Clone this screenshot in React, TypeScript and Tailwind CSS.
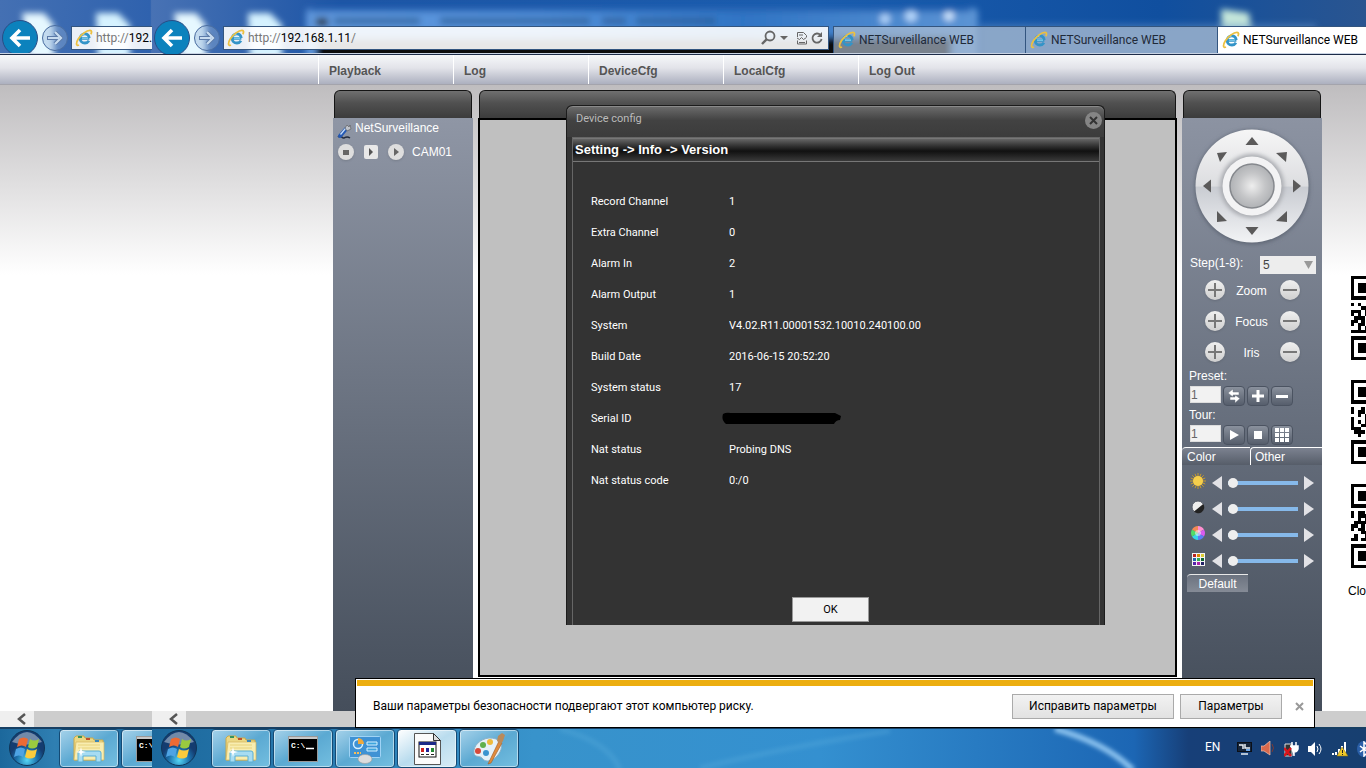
import { useState, type ReactNode } from "react";

const MENU = ["Playback", "Log", "DeviceCfg", "LocalCfg", "Log Out"];

const VERSION_ROWS: [string, string][] = [
  ["Record Channel", "1"],
  ["Extra Channel", "0"],
  ["Alarm In", "2"],
  ["Alarm Output", "1"],
  ["System", "V4.02.R11.00001532.10010.240100.00"],
  ["Build Date", "2016-06-15 20:52:20"],
  ["System status", "17"],
  ["Serial ID", ""],
  ["Nat status", "Probing DNS"],
  ["Nat status code", "0:/0"],
];

const UI_FONT = "font-[Roboto,'Noto_Sans',sans-serif]";

function IeIcon() {
  return (
    <svg width="18" height="18" viewBox="0 0 18 18" className="shrink-0">
      <path
        d="M5 9.400h9.400M14.200 9.200C14 6.400 12.200 4.800 9.800 4.800c-2.600 0-4.600 2-4.600 4.600 0 2.700 2 4.600 4.700 4.600 1.800 0 3.200-.8 4.100-2.200"
        fill="none"
        stroke="#3394c8"
        strokeWidth="2.800"
      />
      <path
        d="M5.500 8C6.100 6.100 7.700 5 9.600 5M7 9.200h6"
        fill="none"
        stroke="#8ad3f0"
        strokeWidth="1.200"
      />
      <path
        d="M4 16C1 17.400.6 14 3.400 9.800 6.400 5.200 11.600 1.400 15 1.400c2 0 1.800 2 .8 3.800"
        fill="none"
        stroke="#ecc040"
        strokeWidth="1.800"
      />
    </svg>
  );
}

function NavButtons() {
  return (
    <>
      <button
        aria-label="Back"
        className="w-9 h-9 mt-5 ml-0.5 shrink-0 rounded-full bg-[#0c82bd] border border-[#2a4d86] flex items-center justify-center"
      >
        <svg width="22" height="20" viewBox="0 0 22 20" fill="none" stroke="#fff" strokeWidth="3.600">
          <path d="M21 10H3M11 2L3 10l8 8" />
        </svg>
      </button>
      <button
        aria-label="Forward"
        className="w-[26px] h-[26px] mt-[25px] ml-1 shrink-0 rounded-full border border-[#4a6da0] bg-[#8fb0d8]/40 flex items-center justify-center"
      >
        <svg width="16" height="14" viewBox="0 0 16 14" fill="none">
          <path d="M0 7h13M8 1l6 6-6 6" stroke="#5b7aa8" strokeWidth="4" />
          <path d="M1 7h11M8 1l6 6-6 6" stroke="#c8dcf0" strokeWidth="2.200" />
        </svg>
      </button>
    </>
  );
}

function Browser({ full }: { full?: boolean }) {
  return (
    <div className="flex flex-1 items-start min-w-0">
      <NavButtons />
      <div
        className={`mt-[26px] ml-[3px] h-6 w-[606px] shrink-0 border border-[#33557f] bg-white/90 flex items-center pl-[3px] text-[12px] ${UI_FONT}`}
      >
        <IeIcon />
        <span className="ml-[3px] text-[#777] whitespace-nowrap">
          http://<span className="text-black">192.168.1.11</span>/
        </span>
        {full && (
          <div className="ml-auto mr-1 flex items-center gap-0.5 text-[#666]">
            <svg width="16" height="16" viewBox="0 0 16 16" fill="none" stroke="currentColor">
              <circle cx="10" cy="6" r="4.500" strokeWidth="1.800" />
              <path d="M6.800 9.200L2 14" strokeWidth="2.400" />
            </svg>
            <svg width="12" height="8" viewBox="0 0 12 8" className="mr-1">
              <path d="M2 2h8L6 6z" fill="currentColor" />
            </svg>
            <svg width="12" height="14" viewBox="0 0 12 14" fill="none" stroke="currentColor">
              <path d="M1.500 6V1.500h6l3 3V6M1.500 9.500V13h9V9.500M1 7l2.500 1.500 2-2 2 2 3-2" />
              <path d="M3 4h4M3 11.500h6" />
            </svg>
            <svg width="14" height="14" viewBox="0 0 14 14" fill="none" stroke="currentColor">
              <path d="M10.500 4A4.600 4.600 0 1 0 11.600 8" strokeWidth="1.800" />
              <path d="M12 1v5H7z" fill="currentColor" stroke="none" />
            </svg>
          </div>
        )}
      </div>
    </div>
  );
}

function TabButton({ active }: { active?: boolean }) {
  return (
    <button
      className={`mt-[26px] h-[27px] w-48 shrink-0 border-t border-l border-[#33557f] flex items-center gap-[3px] pl-1 text-[12px] ${UI_FONT} ${
        active ? "bg-white text-black" : "bg-[#b4c1d3]/65 text-[#1f2a38]"
      }`}
    >
      <IeIcon />
      NETSurveillance WEB
    </button>
  );
}

function ChromeGlass() {
  return (
    <svg
      className="absolute inset-0 w-full h-full"
      viewBox="0 0 1366 54"
      preserveAspectRatio="none"
    >
      <defs>
        <linearGradient id="sky" x1="0" x2="1" y1="0" y2="0">
          <stop offset="0" stopColor="#4470b3" />
          <stop offset="0.110" stopColor="#2f62ae" />
          <stop offset="0.111" stopColor="#4872b4" />
          <stop offset="0.250" stopColor="#1d55a6" />
          <stop offset="0.600" stopColor="#1a5cae" />
          <stop offset="0.850" stopColor="#104f9f" />
          <stop offset="1" stopColor="#2a5590" />
        </linearGradient>
        <linearGradient id="aero" x1="0" x2="1" y1="0" y2="0">
          <stop offset="0" stopColor="#5f97dc" />
          <stop offset="0.350" stopColor="#5290da" />
          <stop offset="0.650" stopColor="#2f74c4" />
          <stop offset="1" stopColor="#5c94d4" />
        </linearGradient>
        <filter id="soft" x="-20%" y="-50%" width="140%" height="200%">
          <feGaussianBlur stdDeviation="3" />
        </filter>
      </defs>
      <rect width="1366" height="54" fill="url(#sky)" />
      <g filter="url(#soft)">
        <rect x="306" y="8" width="672" height="60" rx="5" fill="url(#aero)" />
        <path d="M310 10h660" stroke="#2b68b6" strokeWidth="4" />
        <rect x="316" y="37" width="636" height="30" fill="#07090d" />
        <path d="M316 22h12" stroke="#2d3a4c" strokeWidth="8" />
        <path d="M334 21h86M440 21h150M602 21h24M636 21h80" stroke="#2b5c96" strokeWidth="6" opacity=".8" />
        <path d="M22 13h22l10 12v36H30z" fill="#e6f8ff" />
        <path d="M96 13h22l12 12v36h-32z" fill="#d5f2ff" />
        <path d="M174 13h22l10 12v36h-24z" fill="#e6f8ff" />
        <path d="M248 13h22l12 12v36h-32z" fill="#d5f2ff" />
        <path d="M1221 9l28 4 3 20h-30z" fill="#c4e6da" />
        <path d="M980 24h336v34H980z" fill="#5f8fc6" opacity="0.5" />
        <circle cx="885" cy="19" r="5" fill="#b4d6fb" />
        <circle cx="911" cy="16" r="6" fill="#b4d6fb" />
        <circle cx="949" cy="16" r="5" fill="#cfe6ff" />
      </g>
    </svg>
  );
}

function PanelHeader() {
  return (
    <div className="h-7 mx-px shrink-0 rounded-t-md border border-b-0 border-[#151515] bg-linear-to-b from-[#707070] via-[#505050] via-45% to-[#3c3c3c]" />
  );
}

function DeviceTree() {
  return (
    <aside className="w-[140px] shrink-0 flex flex-col pt-[5px]">
      <PanelHeader />
      <div className="flex-1 bg-linear-to-b from-[#8f96a5] to-[#454e5b] text-white text-[12px]">
        <div className="flex items-center h-5 pl-1 gap-[3px]">
          <svg width="15" height="18" viewBox="0 0 15 18" className="mt-2">
            <path d="M1 14c3-3 4 2 6 1s3-2 6 0" stroke="#222b3d" strokeWidth="1.500" fill="none" />
            <path d="M3 13l6-7" stroke="#2358b4" strokeWidth="4" strokeLinecap="round" />
            <path d="M3.500 11.500l5-6" stroke="#c4dcf8" strokeWidth="1.300" />
            <path d="M8 5l2-3 2 2 1-2 1 4-4 2z" fill="#bfc3ca" stroke="#555" strokeWidth=".6" />
          </svg>
          NetSurveillance
        </div>
        <div className="flex items-center h-7 pl-[5px]">
          <button aria-label="Stop" className="w-4 h-4 rounded-full bg-[#dedede] flex items-center justify-center shadow">
            <span className="w-1.5 h-[5px] bg-[#666]" />
          </button>
          <button aria-label="Stream" className="ml-[10px] w-3.5 h-3.5 rounded-xs bg-[#e8e8e8] flex items-center justify-center">
            <svg width="6" height="8"><path d="M1 0l4 4-4 4z" fill="#555" /></svg>
          </button>
          <button aria-label="Play" className="ml-[10px] w-4 h-4 rounded-full bg-[#dedede] flex items-center justify-center shadow">
            <svg width="6" height="8"><path d="M1 0l5 4-5 4z" fill="#666" /></svg>
          </button>
          <span className="ml-2">CAM01</span>
        </div>
      </div>
    </aside>
  );
}

function PtzWheel() {
  return (
    <svg width="124" height="124" viewBox="-62 -62 124 124" className="mx-auto shrink-0">
      <defs>
        <linearGradient id="disc" x1="0" x2="0" y1="0" y2="1">
          <stop offset="0" stopColor="#f6f6f6" />
          <stop offset="0.500" stopColor="#dcdde0" />
          <stop offset="0.510" stopColor="#c9ccd2" />
          <stop offset="1" stopColor="#f2f3f5" />
        </linearGradient>
        <radialGradient id="hub">
          <stop offset="0" stopColor="#eeeeee" />
          <stop offset="0.600" stopColor="#c4c5c7" />
          <stop offset="1" stopColor="#b0b2b5" />
        </radialGradient>
        <filter id="discShadow"><feGaussianBlur stdDeviation="2" /></filter>
      </defs>
      <circle r="57" cy="1" fill="#5c6371" filter="url(#discShadow)" />
      <circle r="56.500" fill="url(#disc)" />
      <circle r="32" fill="#a9abb0" filter="url(#discShadow)" />
      <circle r="29.500" fill="#f3f3f4" />
      <circle r="22" fill="url(#hub)" stroke="#85888d" strokeWidth="1.500" />
      {[0, 90, 180, 270].map((a) => (
        <path key={a} d="M0-49l6.500 8h-13z" transform={`rotate(${a})`} fill="#5b5a5a" />
      ))}
      <g fill="#5b5a5a">
        <path d="M-35-33L-25-34L-32-24zM35-34L24-33L34-24zM-35 25L-25 35L-35 36zM35 25V36L24 35z" />
      </g>
    </svg>
  );
}

function RoundButton({ label, minus }: { label: string; minus?: boolean }) {
  return (
    <button
      aria-label={label}
      className="w-5 h-5 rounded-full bg-linear-to-b from-[#f0f0f0] to-[#cfcfcf] shadow flex items-center justify-center"
    >
      <svg width="14" height="14" stroke="#777" strokeWidth="2">
        <path d={minus ? "M0 7h14" : "M0 7h14M7 0v14"} />
      </svg>
    </button>
  );
}

function SmallButton({ label, children }: { label: string; children: ReactNode }) {
  return (
    <button
      aria-label={label}
      className="w-[22px] h-5 rounded-sm border border-[#4b5361] bg-linear-to-b from-[#8a919d] to-[#565e6c] flex items-center justify-center"
    >
      <svg width="16" height="16" viewBox="0 0 16 16" fill="#fff">
        {children}
      </svg>
    </button>
  );
}

function NumberRow({ label, children }: { label: string; children: ReactNode }) {
  return (
    <div className="pl-[7px]">
      <label htmlFor={label} className="block h-5 leading-5">
        {label}:
      </label>
      <div className="flex items-start h-[19px] gap-[2px] pl-px">
        <input
          id={label}
          defaultValue="1"
          className="w-[31px] h-[17px] bg-[#f2f2f2] border border-[#ddd] text-[#666] text-[12px]"
        />
        {children}
      </div>
    </div>
  );
}

const COLOR_ICONS: { name: string; icon: ReactNode }[] = [
  {
    name: "Brightness",
    icon: (
      <>
        <path
          d="M8 0v16M0 8h16M2.300 2.300l11.400 11.400M13.700 2.300L2.300 13.700M5 .8l6 14.400M11 .8L5 15.200M.8 5l14.400 6M.8 11l14.400-6"
          stroke="#c79a2c"
        />
        <circle cx="8" cy="8" r="5" fill="#f6cf4c" />
      </>
    ),
  },
  {
    name: "Contrast",
    icon: (
      <>
        <circle cx="8" cy="8" r="6" fill="#eee" stroke="#555c68" />
        <path d="M13.200 5A6 6 0 0 1 4 12.600z" fill="#222" />
      </>
    ),
  },
  {
    name: "Hue",
    icon: (
      <>
        <path d="M8 8V1a7 7 0 0 1 6 3.500z" fill="#ff8fd0" />
        <path d="M8 8l6-3.500a7 7 0 0 1 0 7z" fill="#d95bf0" />
        <path d="M8 8l6 3.500A7 7 0 0 1 8 15z" fill="#5f7bf5" />
        <path d="M8 8v7a7 7 0 0 1-6-3.500z" fill="#38d5e8" />
        <path d="M8 8l-6 3.500a7 7 0 0 1 0-7z" fill="#52dd68" />
        <path d="M8 8L2 4.500A7 7 0 0 1 8 1z" fill="#f58a55" />
        <circle cx="8" cy="8" r="3" fill="#fff" opacity=".5" />
      </>
    ),
  },
  {
    name: "Saturation",
    icon: (
      <>
        <rect x="2" y="2" width="13" height="13" fill="#f4f4f4" />
        {["#b22", "#d80", "#dc3", "#26a", "#3a5", "#163", "#52a", "#a2a", "#226"].map((c, i) => (
          <rect key={c} x={3 + (i % 3) * 4} y={3 + Math.floor(i / 3) * 4} width="3" height="3" fill={c} />
        ))}
      </>
    ),
  },
];

function ColorSlider({ name, icon }: { name: string; icon: ReactNode }) {
  const [value, setValue] = useState(0);
  return (
    <div className="flex items-center h-[26px] pl-2">
      <svg width="16" height="16" viewBox="0 0 16 16" className="mb-1">
        {icon}
      </svg>
      <button aria-label={`${name} down`} onClick={() => setValue((v) => Math.max(0, v - 1))} className="ml-1.5">
        <svg width="10" height="14"><path d="M10 0v14L0 7z" fill="#e2e2e6" /></svg>
      </button>
      <input
        type="range"
        aria-label={name}
        value={value}
        onChange={(e) => setValue(Number(e.target.value))}
        className="ml-1.5 w-[70px] h-3 appearance-none bg-transparent [&::-webkit-slider-runnable-track]:h-1 [&::-webkit-slider-runnable-track]:bg-[#86b9ea] [&::-webkit-slider-thumb]:appearance-none [&::-webkit-slider-thumb]:size-[10px] [&::-webkit-slider-thumb]:-mt-[3px] [&::-webkit-slider-thumb]:rounded-full [&::-webkit-slider-thumb]:bg-[#eeeeee]"
      />
      <button aria-label={`${name} up`} onClick={() => setValue((v) => Math.min(100, v + 1))} className="ml-1.5">
        <svg width="10" height="14"><path d="M0 0v14l10-7z" fill="#e2e2e6" /></svg>
      </button>
    </div>
  );
}

function PtzPanel() {
  return (
    <aside className="w-[140px] shrink-0 flex flex-col pt-[5px] text-white text-[12px]">
      <PanelHeader />
      <div className="flex-1 flex flex-col pt-[6px] bg-linear-to-b from-[#8c93a2] to-[#454e5b]">
        <PtzWheel />
        <div className="flex items-start h-5 mt-2 pl-2">
          <label htmlFor="step" className="w-[70px] leading-[14px]">
            Step(1-8):
          </label>
          <div className="relative w-14">
            <select
              id="step"
              defaultValue="5"
              className="appearance-none block w-full h-[18px] pl-[3px] bg-[#ededed] text-[#444] text-[12px]"
            >
              {[1, 2, 3, 4, 5, 6, 7, 8].map((n) => (
                <option key={n}>{n}</option>
              ))}
            </select>
            <svg width="9" height="8" className="absolute right-[3px] top-[5px] pointer-events-none">
              <path d="M0 0h9L4.500 8z" fill="#999" />
            </svg>
          </div>
        </div>
        {["Zoom", "Focus", "Iris"].map((name) => (
          <div key={name} className="flex items-center h-[31px] pl-[23px] pb-[3px]">
            <RoundButton label={`${name} in`} />
            <span className="w-[55px] text-center pt-0.5 pr-0.5">{name}</span>
            <RoundButton label={`${name} out`} minus />
          </div>
        ))}
        <div className="-mt-[3px]">
          <NumberRow label="Preset">
            <SmallButton label="Go to preset">
              <path d="M7 1v3h6v3H7v2L2 5zM9 7v2H4v3h5v3l5-4.500z" stroke="#68707d" strokeWidth=".5" />
            </SmallButton>
            <SmallButton label="Add preset">
              <path d="M6.500 2h3v4.500H14v3H9.500V14h-3V9.500H2v-3h4.500z" />
            </SmallButton>
            <SmallButton label="Remove preset">
              <path d="M2 7h12v3H2z" />
            </SmallButton>
          </NumberRow>
          <NumberRow label="Tour">
            <SmallButton label="Start tour">
              <path d="M4 3l9 5-9 5z" />
            </SmallButton>
            <SmallButton label="Stop tour">
              <path d="M4 4h8v8H4z" />
            </SmallButton>
            <SmallButton label="Edit tour">
              <path d="M1 1h4v4H1zM6 1h4v4H6zM11 1h4v4h-4zM1 6h4v4H1zM6 6h4v4H6zM11 6h4v4h-4zM1 11h4v4H1zM6 11h4v4H6zM11 11h4v4h-4z" />
            </SmallButton>
          </NumberRow>
        </div>
        <div className="flex mt-[3px] h-[18px]">
          <button className="w-[68px] pl-[5px] text-left rounded-tl border-t border-white bg-linear-to-b from-[#7c8290] to-[#565d69] leading-4">
            Color
          </button>
          <button className="flex-1 pl-1 text-left rounded-tl border-t border-l border-white bg-linear-to-b from-[#7c8290] to-[#565d69] leading-4">
            Other
          </button>
        </div>
        <div className="pt-[5px]">
          {COLOR_ICONS.map((c) => (
            <ColorSlider key={c.name} name={c.name} icon={c.icon} />
          ))}
        </div>
        <button className="ml-[5px] w-[61px] h-[18px] leading-4 border-t border-[#e8e8e8] rounded-tl bg-linear-to-b from-[#6c7380] to-[#858b96]">
          Default
        </button>
      </div>
    </aside>
  );
}

const FINDER = ["#####", "#....", "#.###", "#.###", "#.###", "#....", "#####"];

const QR_BODIES = [
  ["#.#..", "...##", "###.#", "#.#.#", ".###.", "##.#.", "#.##.", "..#.#", "#####"],
  ["#..#.", "#.##.", "..#.#", "#...#", "#.#.#", "#..##", "###..", ".###.", "..#.."],
  ["#.##.", "#.###", "..#.#", ".####", "##.#.", "#.##.", "...##", ".#..#", "##.##"],
];

function QrCode({ body }: { body: string[] }) {
  const rows = [...FINDER, ".....", ...body, ".....", ...FINDER];
  return (
    <svg width="17" height="84" viewBox="0 0 5 25" preserveAspectRatio="none" shapeRendering="crispEdges">
      {rows.flatMap((row, y) =>
        [...row].map((c, x) =>
          c === "#" ? <rect key={`${x}-${y}`} x={x} y={y} width="1" height="1" /> : null,
        ),
      )}
    </svg>
  );
}

function VersionDialog() {
  return (
    <section
      role="dialog"
      aria-label="Device config"
      className={`absolute left-[88px] right-[72px] top-5 h-[520px] flex flex-col rounded-t-md bg-[#333] border border-b-0 border-[#1c1c1c] text-white text-[11px] ${UI_FONT}`}
    >
      <header className="h-[31px] shrink-0 flex items-center justify-between pl-[9px] pr-0.5 pb-1 rounded-t-md border-t border-[#8a8a8a] bg-linear-to-b from-[#6a6a6a] via-[#424242] via-45% to-[#3c3c3c] text-[#bbb]">
        <span className="pb-0.5">Device config</span>
        <button aria-label="Close" className="w-[17px] h-[17px] rounded-full bg-[#858585] flex items-center justify-center">
          <svg width="9" height="9" stroke="#333" strokeWidth="2"><path d="M1 1l7 7M8 1L1 8" /></svg>
        </button>
      </header>
      <div className="flex-1 flex flex-col ml-[5px] mr-1 border-x border-t border-[#666]">
        <h2 className="h-6 shrink-0 pl-[2px] leading-[22px] border-y border-[#777] bg-linear-to-b from-[#666] via-[#111] via-55% to-[#3a3a3a] font-bold text-[13px] font-['Liberation_Sans',sans-serif]">
          Setting -&gt; Info -&gt; Version
        </h2>
        <table className="mt-[25px] ml-[18px] w-[330px] table-fixed">
          <tbody>
            {VERSION_ROWS.map(([label, value]) => (
              <tr key={label} className="h-[31px]">
                <th scope="row" className="w-[138px] p-0 text-left font-normal">
                  {label}
                </th>
                <td className="p-0">
                  {value ? (
                    <div className="w-48 overflow-hidden whitespace-nowrap">{value}</div>
                  ) : (
                    <svg width="120" height="14" viewBox="0 0 120 14" className="-ml-[7px] mb-1">
                      <path d="M1 3q3-2 8-1h104l6 3-1 4q-4 0-6 4H4q-5-4-3-10z" fill="#000" />
                    </svg>
                  )}
                </td>
              </tr>
            ))}
          </tbody>
        </table>
        <button className="mt-auto mb-[3px] mr-[11px] pt-0.5 w-[77px] h-[25px] self-center border border-[#999] bg-[#f2f2f2] text-black">
          OK
        </button>
      </div>
    </section>
  );
}

function ScrollArrow() {
  return (
    <button aria-label="Scroll left" className="w-[34px] h-4 shrink-0 bg-[#efefef] flex items-center justify-center pl-2">
      <svg width="9" height="12" fill="none" stroke="#555" strokeWidth="2.500"><path d="M8 1L2 6l6 5" /></svg>
    </button>
  );
}

function FolderIcon() {
  return (
    <svg width="34" height="30" viewBox="0 0 34 30">
      <path d="M2 4l2-2h8l1 2h8l1 2h9v20H2z" fill="#ecd884" stroke="#c9a94b" />
      <path d="M4 8h28v18H2z" fill="#f8edb0" stroke="#d5b65c" strokeWidth=".7" />
      <path d="M6 3h4" stroke="#38935c" strokeWidth="2" />
      <path d="M14 5h4" stroke="#c0502c" strokeWidth="2" />
      <path d="M23 7h4" stroke="#3a86b8" strokeWidth="2" />
      <path d="M6 11h22M6 14h22" stroke="#e8d27a" />
      <path d="M6 28v-9q0-2 2-2h19q2 0 2 2v9h-5v-6H11v6z" fill="#a7dcf2" stroke="#5aaed4" />
      <path d="M9 13l1 4 4 1-4 1-1 4-1-4-4-1 4-1z" fill="#fff" />
    </svg>
  );
}

function CmdIcon() {
  return (
    <svg width="30" height="26" viewBox="0 0 30 26">
      <rect x=".5" y=".5" width="29" height="25" fill="#000" stroke="#999" />
      <path d="M1 1h28v2H1z" fill="#c8c8c8" />
      <text x="3" y="12" fontSize="8" fontWeight="bold" fontFamily="Liberation Mono, monospace" fill="#fff">C:\</text>
      <path d="M18 12.500h8" stroke="#fff" strokeWidth="1.500" />
    </svg>
  );
}

function ControlPanelIcon() {
  return (
    <svg width="34" height="30" viewBox="0 0 34 30">
      <rect x="1.500" y="2.500" width="31" height="21" rx="1" fill="#3f92d4" stroke="#9fd3f5" />
      <circle cx="10" cy="10" r="4.500" fill="#3f92d4" stroke="#d6f0ff" strokeWidth="1.500" />
      <path d="M10 10V4a6 6 0 0 1 6 6z" fill="#f0a93c" />
      <path d="M19 8h10v3H19zM19 14h10v3H19z" fill="#3fa4dc" stroke="#d6f0ff" />
      <path d="M6 19h7" stroke="#f5bd5a" strokeWidth="2" strokeDasharray="2 1" />
      <ellipse cx="17" cy="25" rx="7" ry="4.500" fill="#dcdcdc" stroke="#999" strokeWidth=".6" />
    </svg>
  );
}

function DocumentIcon() {
  return (
    <svg width="27" height="32" viewBox="0 0 27 32">
      <path d="M.5.500h19l7 7v24H.500z" fill="#fbfbfb" stroke="#555" />
      <path d="M19.500.500v7h7z" fill="#ddd" stroke="#333" />
      <rect x="5" y="9" width="17" height="15" fill="#fff" stroke="#111" />
      <rect x="5" y="9" width="17" height="3" fill="#1b2a88" />
      <path d="M7 15h3v4H7z" fill="#c22" />
      <path d="M12 15h3v4h-3z" fill="#229" />
      <path d="M17 15h3v4h-3z" fill="#283" />
      <path d="M7 21.500h13" stroke="#222" strokeDasharray="3 2" />
    </svg>
  );
}

function PaintIcon() {
  return (
    <svg width="34" height="32" viewBox="0 0 34 32">
      <path d="M17 5C8 6 1 13 2 20c1 5 5 2 8 5 3 4 7 4 13 0 6-5 8-12 5-16-2-3-6-4-11-4z" fill="#e6f1f8" stroke="#8fb3c8" />
      <circle cx="6" cy="18" r="3" fill="#d84a3a" />
      <circle cx="11" cy="12" r="3" fill="#5fb04c" />
      <circle cx="18" cy="9" r="3" fill="#efba3c" />
      <circle cx="14" cy="20" r="3" fill="#3b94cf" />
      <path d="M16 31l11-23 3 2-11 20z" fill="#e08a3c" stroke="#9d5a24" strokeWidth=".6" />
      <path d="M25 8l1-5 4-3 3 2-2 6-2 3z" fill="#b98a5a" />
    </svg>
  );
}

function TaskButton({ label, active, children }: { label: string; active?: boolean; children: ReactNode }) {
  return (
    <button
      aria-label={label}
      className={`w-[60px] h-[39px] shrink-0 rounded-sm border border-[#144a74] inset-ring inset-ring-white/50 flex items-center justify-center bg-linear-to-br ${
        active ? "from-white via-[#b9dcee] to-[#d8ecf5]" : "from-[#a5d2ea] via-[#5ba9d2] to-[#74bfe0]"
      }`}
    >
      {children}
    </button>
  );
}

function StartButton() {
  return (
    <button aria-label="Start" className="w-[57px] shrink-0 flex justify-center pr-1">
      <svg width="38" height="38" viewBox="-19 -19 38 38">
        <defs>
          <radialGradient id="orb" cy="0.850">
            <stop offset="0" stopColor="#56d6f5" />
            <stop offset="0.600" stopColor="#1b6faa" />
            <stop offset="1" stopColor="#143c70" />
          </radialGradient>
        </defs>
        <circle r="17.500" fill="url(#orb)" stroke="#0f3558" />
        <path d="M-15-6Q0-26 15-6 0-1-15-6z" fill="#fff" opacity=".4" />
        <path d="M-8-9q5-3 9 0L-1-1q-4-3-9 0z" fill="#ec6a34" />
        <path d="M3-9q4 3 9 0L10-1Q5 2 1-1z" fill="#9aca3f" />
        <path d="M-11 1q5-3 9 0l-2 8q-4-3-9 0z" fill="#4ea3e4" />
        <path d="M0 1q5 3 10 0L8 9Q3 12-2 9z" fill="#fbcb3c" />
      </svg>
    </button>
  );
}

function TrayIcons() {
  return (
    <div className="ml-[17px] flex items-center gap-[9px]">
      <svg width="15" height="15" viewBox="0 0 15 15">
        <rect x=".500" y="1.500" width="14" height="9" fill="#16253a" stroke="#0a0f18" />
        <path d="M2 4h4v4M8 3v4h5M4 13h7" stroke="#e8eef5" strokeWidth="1.500" fill="none" />
        <path d="M9 9h4" stroke="#6fa8e8" strokeWidth="2" />
      </svg>
      <svg width="14" height="15" viewBox="0 0 14 15">
        <path d="M0 5h3l6-5v14L3 10H0z" fill="#d8694c" stroke="#f5c3b2" strokeWidth=".7" />
        <path d="M11 3q3 4 0 8" stroke="#7e3a32" fill="none" />
      </svg>
      <svg width="15" height="16" viewBox="0 0 15 16">
        <path d="M1 3h7v12H1z" fill="#333" stroke="#ddd" />
        <path d="M8 1v4M12 1v4M6 5h8v3q-1 3-4 3v4" stroke="#fff" strokeWidth="1.500" fill="#fff" />
        <path d="M0 7l7 8M7 7l-7 8" stroke="#d9141c" strokeWidth="2.500" />
      </svg>
      <svg width="15" height="14" viewBox="0 0 15 14">
        <path d="M0 4h3l4-4v14L3 10H0z" fill="#fff" />
        <path d="M9 4q2 3 0 6M11 2q4 5 0 10" stroke="#fff" fill="none" />
      </svg>
      <svg width="16" height="16" viewBox="0 0 16 16">
        <path d="M0 13h2M4 14v-3M7 14V8M10 14V5M13 14V1" stroke="#fff" strokeWidth="2" />
        <path d="M10 6l6 9H5z" fill="#f0c929" stroke="#8d7410" strokeWidth=".6" />
        <path d="M10.500 9v3M10.500 13v1" stroke="#222" />
      </svg>
      <svg width="15" height="16" viewBox="0 0 15 16">
        <ellipse cx="7" cy="8" rx="7" ry="8" fill="#2a5fa8" />
        <path d="M3 5l8 6-4 4V1l4 4-8 6" stroke="#fff" strokeWidth="1.500" fill="none" />
      </svg>
    </div>
  );
}

function Taskbar() {
  return (
    <footer className="relative h-[41px] shrink-0 border-t-2 border-[#173f63]">
      <svg className="absolute inset-0 w-full h-full" viewBox="0 0 1366 40" preserveAspectRatio="none">
        <defs>
          <linearGradient id="bar">
            <stop offset="0" stopColor="#1c689c" />
            <stop offset="0.040" stopColor="#2f7fb2" />
            <stop offset="0.110" stopColor="#1c689c" />
            <stop offset="0.390" stopColor="#3893cb" />
            <stop offset="0.600" stopColor="#3490d0" />
            <stop offset="0.830" stopColor="#1c66b4" />
            <stop offset="0.870" stopColor="#173f78" />
            <stop offset="1" stopColor="#173f70" />
          </linearGradient>
          <filter id="glow"><feGaussianBlur stdDeviation="2" /></filter>
        </defs>
        <rect width="1366" height="40" fill="url(#bar)" />
        <path d="M1055 0q50 14 78 42" stroke="#8cc3ef" strokeWidth="6" fill="none" filter="url(#glow)" />
        <path d="M560 0q50 14 60 42M700 40q80-20 190-38" stroke="#63b4e0" strokeWidth="5" fill="none" filter="url(#glow)" opacity=".3" />
      </svg>
      <div className="relative flex h-full">
        <div className="w-[152px] shrink-0 overflow-hidden flex gap-[2px]">
          <StartButton />
          <TaskButton label="Explorer"><FolderIcon /></TaskButton>
          <TaskButton label="Command prompt"><CmdIcon /></TaskButton>
        </div>
        <div className="flex-1 min-w-0 flex gap-[2px]">
          <StartButton />
          <TaskButton label="Explorer"><FolderIcon /></TaskButton>
          <TaskButton label="Command prompt"><CmdIcon /></TaskButton>
          <TaskButton label="Control panel"><ControlPanelIcon /></TaskButton>
          <TaskButton label="Document" active><DocumentIcon /></TaskButton>
          <TaskButton label="Paint"><PaintIcon /></TaskButton>
        </div>
        <div className={`w-[161px] shrink-0 overflow-hidden flex items-center text-white text-[12px] ${UI_FONT}`}>
          <span className="pb-1">EN</span>
          <TrayIcons />
        </div>
      </div>
    </footer>
  );
}

function SecurityNotice() {
  return (
    <div
      role="alert"
      className={`absolute left-[355px] right-[51px] bottom-10 h-[50px] bg-white border border-black p-px flex flex-col text-black text-[12px] ${UI_FONT}`}
    >
      <div className="h-1.5 shrink-0 bg-[#ecae10]" />
      <div className="flex-1 flex items-center pl-4 pr-[9px]">
        <p>Ваши параметры безопасности подвергают этот компьютер риску.</p>
        <button className="ml-auto w-[162px] h-[25px] border border-[#aaa] bg-linear-to-b from-[#f2f2f2] to-[#e2e2e2]">
          Исправить параметры
        </button>
        <button className="ml-1.5 w-[102px] h-[25px] border border-[#aaa] bg-linear-to-b from-[#f2f2f2] to-[#e2e2e2]">
          Параметры
        </button>
        <button aria-label="Dismiss" className="ml-[13px]">
          <svg width="9" height="9" stroke="#999" strokeWidth="2"><path d="M1 1l7 7M8 1L1 8" /></svg>
        </button>
      </div>
    </div>
  );
}

export default function App() {
  return (
    <div className="relative h-screen overflow-hidden flex flex-col bg-white font-['Liberation_Sans',Arial,sans-serif]">
      <header className="relative h-[55px] shrink-0 overflow-hidden border-b border-[#1d2c48]">
        <ChromeGlass />
        <div className="relative flex h-[54px] border-b border-[#c9d4e4]">
          <div className="w-[152px] shrink-0 overflow-hidden flex">
            <Browser />
          </div>
          <div className="w-[681px] shrink-0 flex">
            <Browser full />
          </div>
          <TabButton />
          <TabButton />
          <TabButton active />
        </div>
      </header>

      <nav className="h-[30px] shrink-0 flex pl-[318px] border-b border-[#a4a4ac] bg-linear-to-b from-[#f6f8fa] via-[#e2e3e9] via-45% to-[#acb0bf]">
        {MENU.map((item) => (
          <a
            key={item}
            href="#"
            className="w-[135px] pl-[10px] border-l border-white text-[12px] leading-8 font-bold text-[#555]"
          >
            {item}
          </a>
        ))}
      </nav>

      <main className="flex-1 min-h-0 flex pl-[333px] bg-linear-to-b from-[#bfbdbf] to-white to-[190px]">
        <DeviceTree />
        <div className="relative flex-1 min-w-0 mx-[5px] pt-[5px] flex flex-col">
          <PanelHeader />
          <div className="flex-1 mb-[34px] border-2 border-black bg-[#c0c0c0]" />
          <VersionDialog />
        </div>
        <PtzPanel />
        <div className="w-11 shrink-0 overflow-hidden pt-[191px] pl-[29px] flex flex-col gap-5">
          {QR_BODIES.map((body, i) => (
            <QrCode key={i} body={body} />
          ))}
          <span className="-ml-[3px] -mt-1.5 text-[12px] text-black">Clo</span>
        </div>
      </main>

      <div className="h-4 shrink-0 flex bg-[#cdcdcd]">
        <div className="w-[152px] shrink-0">
          <ScrollArrow />
        </div>
        <ScrollArrow />
      </div>

      <Taskbar />
      <SecurityNotice />
    </div>
  );
}
